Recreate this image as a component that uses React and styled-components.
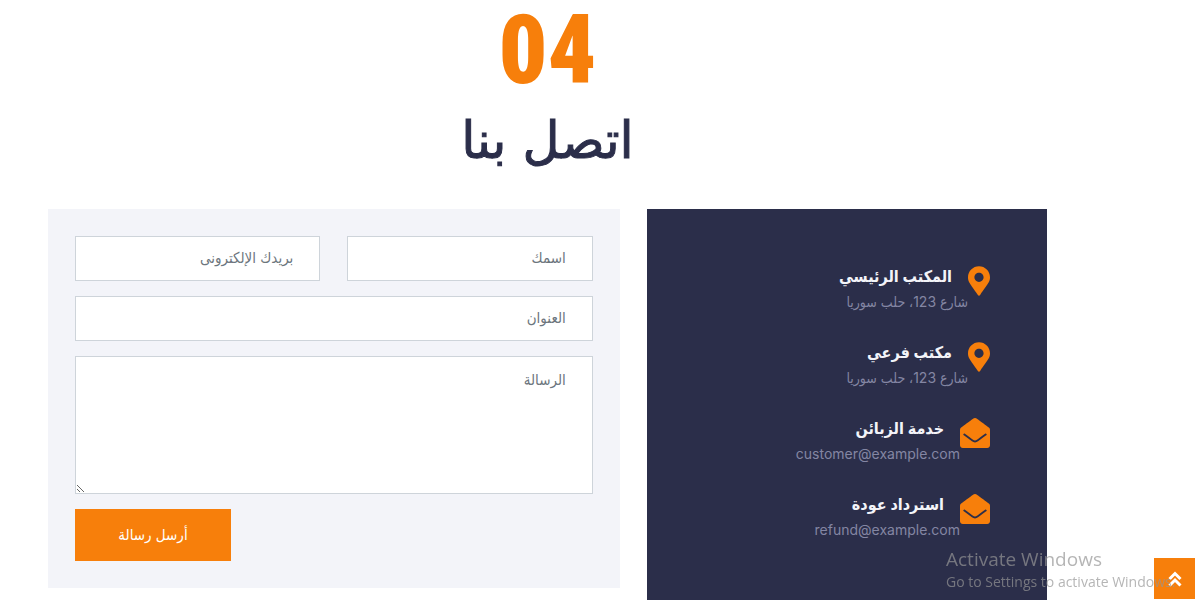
import React from "react";
import styled, { createGlobalStyle } from "styled-components";
import { FaMapMarkerAlt, FaEnvelopeOpen } from "react-icons/fa";

const body = 'Inter, "DejaVu Sans Condensed", "DejaVu Sans", sans-serif';

const GlobalStyle = createGlobalStyle`
  * { box-sizing: border-box; }
  body { margin: 0; background: #fff; font-family: ${body}; font-size: 15px; overflow-x: hidden; }
`;

const Page = styled.main`
  direction: rtl;
  padding: 0 155px 16px 48px;
`;

const Heading = styled.header`
  display: flex;
  flex-direction: column;
  align-items: center;
  padding-bottom: 28px;
  color: #2b2e4a;
`;

const Number = styled.span`
  font-family: "Roboto Condensed", Roboto, sans-serif;
  font-size: 96px;
  line-height: 100px;
  font-weight: 900;
  color: #f77f0b;
`;

const Title = styled.h2`
  margin: 0;
  font-family: "DejaVu Sans", sans-serif;
  font-size: 51px;
  line-height: 81px;
  font-weight: 400;
  -webkit-text-stroke: 1px currentColor;
`;

const Columns = styled.div`
  display: grid;
  grid-template-columns: minmax(0, 7fr) minmax(0, 10fr);
  gap: 27px;
  align-items: start;
`;

const Info = styled.section`
  display: flex;
  flex-direction: column;
  gap: 24px;
  padding: 57px 57px 54px;
  background: #2b2e4a;
`;

const Office = styled.div`
  display: flex;
  align-items: flex-start;
  color: #f77f0b;

  svg {
    flex: none;
    width: ${(p) => p.$iconWidth}px;
    height: 30px;
  }
`;

const OfficeName = styled.h3`
  margin: 0 16px 0 0;
  font-size: 16px;
  line-height: 20px;
  font-weight: 700;
  color: #f3f4f9;
`;

const OfficeText = styled.p`
  margin: 0;
  font-size: 14px;
  line-height: 32px;
  color: #8486a3;
`;

const Form = styled.form`
  display: grid;
  grid-template-columns: 1fr 1fr;
  gap: 15px 27px;
  padding: 27px;
  background: #f3f4f9;
`;

const Field = styled.input`
  width: 100%;
  height: 45px;
  grid-column: ${(p) => (p.$wide ? "1 / -1" : "auto")};
  padding: 0 26px 2px;
  border: 1px solid #ced4da;
  border-radius: 0;
  background: #fff;
  font: 15px ${body};
  &::placeholder { color: #6c757d; opacity: 1; }
`;

const Message = styled(Field)`
  display: block;
  height: 138px;
  padding-top: 12px;
  line-height: 22px;
  resize: vertical;
`;

const Send = styled.button`
  grid-column: 1 / -1;
  justify-self: end;
  width: 156px;
  height: 52px;
  padding: 0 0 2px;
  border: 0;
  background: #f77f0b;
  color: #fff;
  font: 15px ${body};
`;

const BackToTop = styled.a`
  position: fixed;
  right: 7px;
  bottom: 17px;
  width: 41px;
  height: 41px;
  display: flex;
  align-items: center;
  justify-content: center;
  background: #f77f0b;
  color: #fff;
`;

const Watermark = styled.aside`
  position: fixed;
  right: 20px;
  bottom: 22px;
  width: 236px;
  color: rgba(150, 150, 150, 0.7);
  font-family: "Open Sans", sans-serif;
  font-size: 14px;
  line-height: 24px;
  white-space: nowrap;
  pointer-events: none;
`;

const WatermarkTitle = styled.div`
  font-size: 19px;
  line-height: 22px;
`;

const offices = [
  { name: "المكتب الرئيسي", text: "شارع 123، حلب سوريا", Icon: FaMapMarkerAlt, iconWidth: 22 },
  { name: "مكتب فرعي", text: "شارع 123، حلب سوريا", Icon: FaMapMarkerAlt, iconWidth: 22 },
  { name: "خدمة الزبائن", text: "customer@example.com", Icon: FaEnvelopeOpen, iconWidth: 30 },
  { name: "استرداد عودة", text: "refund@example.com", Icon: FaEnvelopeOpen, iconWidth: 30 },
];

export default function App() {
  return (
    <>
      <GlobalStyle />
      <Page lang="ar" id="top">
        <Heading>
          <Number>04</Number>
          <Title>اتصل بنا</Title>
        </Heading>
        <Columns>
          <Info>
            {offices.map(({ name, text, Icon, iconWidth }) => (
              <Office key={name} $iconWidth={iconWidth}>
                <Icon />
                <div>
                  <OfficeName>{name}</OfficeName>
                  <OfficeText>{text}</OfficeText>
                </div>
              </Office>
            ))}
          </Info>
          <Form>
            <Field aria-label="اسمك" placeholder="اسمك" />
            <Field type="email" aria-label="بريدك الإلكترونى" placeholder="بريدك الإلكترونى" />
            <Field $wide aria-label="العنوان" placeholder="العنوان" />
            <Message as="textarea" $wide aria-label="الرسالة" placeholder="الرسالة" />
            <Send type="submit">أرسل رسالة</Send>
          </Form>
        </Columns>
      </Page>
      <BackToTop href="#top" aria-label="الأعلى">
        <svg width="14" height="16" viewBox="0 0 14 16" fill="none" stroke="currentColor" strokeWidth="3">
          <path d="M1.5 8 7 2.5 12.5 8M1.5 14.5 7 9l5.500 5.500" />
        </svg>
      </BackToTop>
      <Watermark>
        <WatermarkTitle>Activate Windows</WatermarkTitle>
        Go to Settings to activate Windows.
      </Watermark>
    </>
  );
}
